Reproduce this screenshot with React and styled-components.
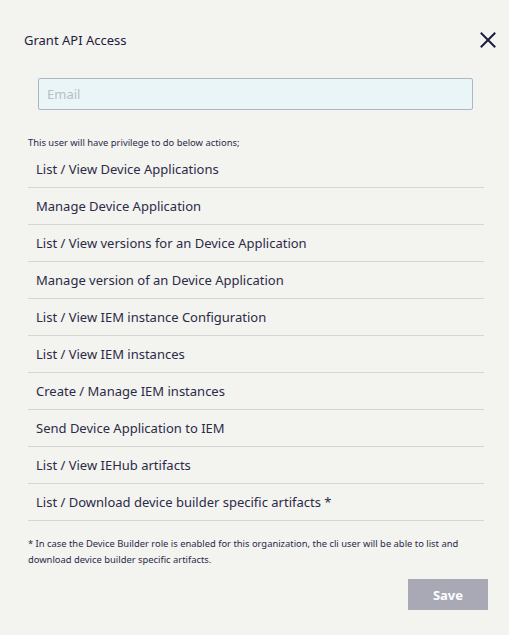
import React from 'react';
import styled, { createGlobalStyle } from 'styled-components';

const GlobalStyle = createGlobalStyle`
  html, body {
    margin: 0;
    padding: 0;
    background: #f3f3f0;
  }
  body {
    font-family: "Noto Sans", "Liberation Sans", sans-serif;
    color: #23233f;
  }
`;

const actions = [
  'List / View Device Applications',
  'Manage Device Application',
  'List / View versions for an Device Application',
  'Manage version of an Device Application',
  'List / View IEM instance Configuration',
  'List / View IEM instances',
  'Create / Manage IEM instances',
  'Send Device Application to IEM',
  'List / View IEHub artifacts',
  'List / Download device builder specific artifacts *',
];

export default function App() {
  return (
    <>
      <GlobalStyle />
      <Dialog>
        <Header>
          <Title>Grant API Access</Title>
          <CloseButton aria-label="Close">
            <svg width="16" height="16" viewBox="0 0 16 16">
              <path d="M1.5 1.5 L14.5 14.5 M14.5 1.5 L1.5 14.5" stroke="#1b1b3d" strokeWidth="2" strokeLinecap="square" fill="none" />
            </svg>
          </CloseButton>
        </Header>

        <EmailInput placeholder="Email" />

        <Hint>This user will have privilege to do below actions;</Hint>

        <ActionList>
          {actions.map((a) => (
            <ActionRow key={a}>{a}</ActionRow>
          ))}
        </ActionList>

        <Footnote>
          * In case the Device Builder role is enabled for this organization, the cli user will be able to list and
          download device builder specific artifacts.
        </Footnote>

        <Footer>
          <SaveButton disabled>Save</SaveButton>
        </Footer>
      </Dialog>
    </>
  );
}

const Dialog = styled.div`
  width: 509px;
  height: 635px;
  box-sizing: border-box;
  padding: 0 21px 0 28px;
  display: flex;
  flex-direction: column;
`;

const Header = styled.div`
  display: flex;
  align-items: center;
  justify-content: space-between;
  height: 80px;
  margin-left: -4px;
  margin-right: -8px;
`;

const Title = styled.h2`
  margin: 0;
  font-size: 13px;
  font-weight: 400;
  color: #1e1e3c;
`;

const CloseButton = styled.button`
  border: none;
  background: none;
  padding: 0;
  width: 16px;
  height: 16px;
  display: flex;
  cursor: pointer;
`;

const EmailInput = styled.input`
  box-sizing: border-box;
  margin: -2px 15px 0 10px;
  height: 32px;
  padding: 0 8px;
  background: #eaf5f7;
  border: 1px solid #a9b8c3;
  border-radius: 2px;
  font-family: inherit;
  font-size: 13px;
  color: #23233f;
  outline: none;
  &::placeholder {
    color: #b7bfc6;
  }
`;

const Hint = styled.p`
  margin: 27px 0 0;
  font-size: 9.4px;
  line-height: 12px;
  color: #2a2a48;
`;

const ActionList = styled.ul`
  list-style: none;
  margin: 2px 4px 0 0;
  padding: 0;
`;

const ActionRow = styled.li`
  height: 37px;
  box-sizing: border-box;
  display: flex;
  align-items: center;
  padding-left: 8px;
  font-size: 13px;
  color: #2b2b47;
  border-bottom: 1px solid #d6d6d3;
`;

const Footnote = styled.p`
  margin: 15px 0 0;
  font-size: 9.4px;
  line-height: 16px;
  color: #2a2a48;
`;

const Footer = styled.div`
  display: flex;
  justify-content: flex-end;
  margin-top: 11px;
`;

const SaveButton = styled.button`
  width: 80px;
  height: 31px;
  border: none;
  border-radius: 0;
  background: #a9a9b6;
  color: #ffffff;
  font-family: inherit;
  font-size: 13px;
  font-weight: 700;
  cursor: default;
`;
